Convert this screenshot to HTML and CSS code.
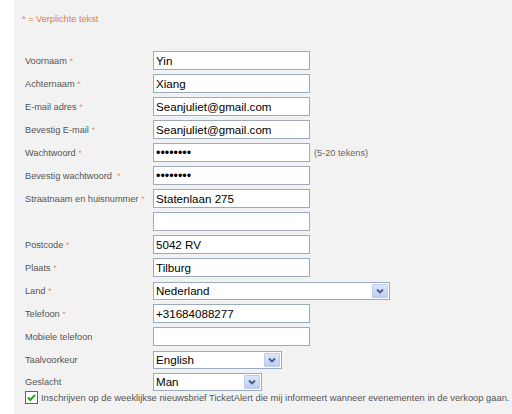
FILE: index.html
```html
<!DOCTYPE html>
<html lang="nl">
<head>
<meta charset="utf-8">
<title>Registratie</title>
<link rel="stylesheet" href="styles.css">
</head>
<body>
<div class="panel">
  <p class="required-note">* = Verplichte tekst</p>
  <form class="form">
    <div class="row"><label>Voornaam <span class="req">*</span></label><input class="field" type="text" value="Yin"></div>
    <div class="row"><label>Achternaam <span class="req">*</span></label><input class="field" type="text" value="Xiang"></div>
    <div class="row"><label>E-mail adres <span class="req">*</span></label><input class="field" type="text" value="Seanjuliet@gmail.com"></div>
    <div class="row"><label>Bevestig E-mail <span class="req">*</span></label><input class="field" type="text" value="Seanjuliet@gmail.com"></div>
    <div class="row"><label>Wachtwoord <span class="req">*</span></label><input class="field pw" type="password" value="abcdefgh"><span class="hint">(5-20 tekens)</span></div>
    <div class="row"><label>Bevestig wachtwoord &nbsp;<span class="req">*</span></label><input class="field pw" type="password" value="abcdefgh"></div>
    <div class="row"><label>Straatnaam en huisnummer <span class="req">*</span></label><input class="field" type="text" value="Statenlaan 275"></div>
    <div class="row"><label></label><input class="field" type="text" value=""></div>
    <div class="row"><label>Postcode <span class="req">*</span></label><input class="field" type="text" value="5042 RV"></div>
    <div class="row"><label>Plaats <span class="req">*</span></label><input class="field" type="text" value="Tilburg"></div>
    <div class="row"><label>Land <span class="req">*</span></label>
      <div class="select select-land"><span class="select-text">Nederland</span><span class="select-btn"><svg width="16" height="16" viewBox="0 0 16 16"><path d="M5 6.5 L8 9.5 L11 6.5" fill="none" stroke="#4a5a7c" stroke-width="1.8"/></svg></span></div>
    </div>
    <div class="row"><label>Telefoon <span class="req">*</span></label><input class="field" type="text" value="+31684088277"></div>
    <div class="row"><label>Mobiele telefoon</label><input class="field" type="text" value=""></div>
    <div class="row"><label>Taalvoorkeur</label>
      <div class="select select-lang"><span class="select-text">English</span><span class="select-btn"><svg width="16" height="16" viewBox="0 0 16 16"><path d="M5 6.5 L8 9.5 L11 6.5" fill="none" stroke="#4a5a7c" stroke-width="1.8"/></svg></span></div>
    </div>
    <div class="row row-tight"><label>Geslacht</label>
      <div class="select select-sex"><span class="select-text">Man</span><span class="select-btn"><svg width="16" height="16" viewBox="0 0 16 16"><path d="M5 6.5 L8 9.5 L11 6.5" fill="none" stroke="#4a5a7c" stroke-width="1.8"/></svg></span></div>
    </div>
    <div class="check-row">
      <span class="checkbox"><svg width="11" height="11" viewBox="0 0 11 11"><path d="M2 5.5 L4.3 8 L9 2.8" fill="none" stroke="#21a121" stroke-width="2"/></svg></span>
      <span class="check-text">Inschrijven op de weeklijkse nieuwsbrief TicketAlert die mij informeert wanneer evenementen in de verkoop gaan.</span>
    </div>
  </form>
</div>
</body>
</html>
```

FILE: styles.css
```css
html, body {
  margin: 0;
  padding: 0;
  background: #ffffff;
}

body {
  font-family: "Liberation Sans", Arial, sans-serif;
  font-size: 9.2px;
  color: #555555;
}

.panel {
  margin-left: 14px;
  background: #f2f2f2;
  min-height: 414px;
  padding: 13px 0 0 8px;
  box-sizing: border-box;
}

.required-note {
  margin: 0;
  line-height: 13px;
  color: #e0803e;
}

.form {
  margin: 25px 0 0 3px;
  display: flex;
  flex-direction: column;
  gap: 4px;
}

.row {
  display: grid;
  grid-template-columns: 128px auto 1fr;
  align-items: center;
  height: 19px;
}

.row-tight {
  margin-top: -1px;
}

.row label {
  white-space: nowrap;
}

.req {
  color: #e9936a;
}

.field {
  width: 157px;
  height: 19px;
  box-sizing: border-box;
  margin: 0;
  padding: 0 2px;
  border: 1px solid #9aabbf;
  background: #ffffff;
  font-family: "Liberation Sans", Arial, sans-serif;
  font-size: 11.6px;
  color: #000000;
  outline: none;
}

.pw {
  font-size: 12.5px;
  letter-spacing: 0;
}

.hint {
  padding-left: 4px;
  color: #666666;
}

.select {
  display: flex;
  align-items: center;
  height: 18px;
  box-sizing: border-box;
  border: 1px solid #9aabbf;
  background: #ffffff;
  font-size: 11.6px;
  color: #000000;
}

.select-land { width: 237px; }
.select-lang { width: 129px; }
.select-sex { width: 109px; }

.select-text {
  flex: 1;
  padding-left: 2px;
  line-height: 16px;
}

.select-btn {
  width: 16px;
  height: 14px;
  margin-right: 1px;
  box-sizing: border-box;
  border: 1px solid #bccbef;
  border-radius: 1px;
  background: linear-gradient(#dde7fc, #bccdf6);
  display: flex;
  align-items: center;
  justify-content: center;
  overflow: hidden;
}

.select-btn svg {
  display: block;
  flex: none;
}

.check-row {
  display: flex;
  align-items: center;
  gap: 3px;
  margin-top: -5px;
  height: 15px;
}

.checkbox {
  width: 13px;
  height: 13px;
  box-sizing: border-box;
  border: 1px solid #3d6a9c;
  background: #ffffff;
  display: flex;
  align-items: center;
  justify-content: center;
}

.checkbox svg {
  display: block;
}

.check-text {
  white-space: nowrap;
  font-size: 9.35px;
}
```
